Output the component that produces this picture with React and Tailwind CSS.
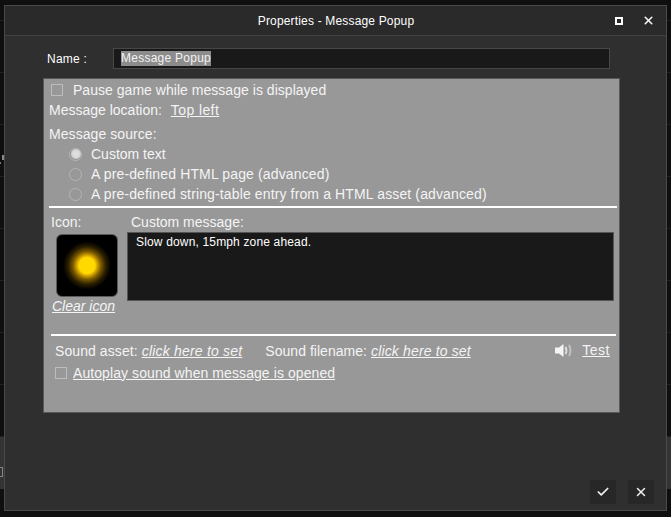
import { Check, X } from "lucide-react";

const rows = [21, 52, 52, 52, 52, 52, 52, 52, 52];

function Checkbox() {
  return <span className="block w-[12px] h-[12px] border border-[#bdbdbd] shrink-0" />;
}

function Radio({ on, label, className }) {
  return (
    <div className="flex items-center h-[20px]">
      <span className="flex items-center justify-center w-[13px] h-[13px] ml-[25px] mr-[9px] rounded-full border border-[#b5b5b5] shrink-0">
        {on && <span className="block w-[10px] h-[10px] rounded-full bg-[radial-gradient(circle,#e2e2e2_0,#d6d6d6_55%,#aaaaaa_100%)]" />}
      </span>
      <span className={className}>{label}</span>
    </div>
  );
}

function Speaker() {
  return (
    <svg width="17" height="13" viewBox="0 0 17 13" className="shrink-0">
      <path d="M0 3.500h4L8.500 0v13L4 9.500H0z" fill="#f4f4f4" />
      <path d="M10.500 3c1.200 2.200 1.200 4.800 0 7" stroke="#e0e0e0" strokeWidth="1.800" fill="none" />
      <path d="M14 1c1.800 3.300 1.800 7.700 0 11" stroke="#c4c4c4" strokeWidth="1.800" fill="none" />
    </svg>
  );
}

export default function App() {
  return (
    <div className="relative w-[671px] h-[517px] bg-[#0f0f0f] overflow-hidden font-['Liberation_Sans',Arial,sans-serif]">
      {/* list behind the dialog, only its edges show */}
      <div className="flex flex-col">
        {rows.map((h, i) => (
          <div key={i} style={{ height: h }} className="border-b border-[#1f1f1f]" />
        ))}
        <div className="h-[52px] bg-[#343434]" />
      </div>
      <span className="absolute left-[2px] top-[155px] w-[2px] h-[5px] bg-[#8a8a8a]" />
      <span className="absolute left-0 top-[162px] w-px h-[2px] bg-[#777777]" />
      <span className="absolute left-0 top-[467px] w-[3px] h-[10px] border border-l-0 border-[#858585]" />

      <div className="absolute left-[4px] top-[5px] w-[663px] h-[506px] flex flex-col bg-[#2f2f2f] border border-[#4a4a4a]">
        <div className="h-[30px] shrink-0 flex items-center bg-[#2a2a2a] border-b border-[#404040] text-[12px] tracking-[0.17px] text-white">
          <div className="flex-1 text-center pl-[52px]">Properties - Message Popup</div>
          <span className="block w-[8px] h-[8px] border-2 border-white mr-[19px]" />
          <X size={13} strokeWidth={3} color="#f5f5f5" className="mr-[11px]" />
        </div>

        <div className="flex items-center h-[21px] mt-[12px] pl-[42px] text-[12px] tracking-[0.25px] text-white">
          <span className="w-[66px]">Name :</span>
          <div className="w-[497px] h-[21px] flex items-center pl-[7px] bg-[#191919] border border-[#474747]">
            <span className="bg-[#8c8c8c] leading-[15px] text-[#f2f2f2]">Message Popup</span>
          </div>
        </div>

        <div className="w-[577px] h-[335px] ml-[38px] mt-[9px] bg-[#989898] border border-[#585858] text-[14px] text-[#f4f4f4]">
          <div className="flex items-center gap-[10px] h-[20px] pl-[7px] mt-px">
            <Checkbox />
            <span className="tracking-[0.03px]">Pause game while message is displayed</span>
          </div>
          <div className="flex items-center h-[20px] pl-[5px]">
            <span>Message location:</span>
            <span className="ml-[9px] underline tracking-[0.4px]">Top left</span>
          </div>
          <div className="flex items-center h-[20px] pl-[5px] mt-[4px] tracking-[0.07px]">Message source:</div>
          <Radio on label="Custom text" />
          <Radio label="A pre-defined HTML page (advanced)" className="tracking-[0.14px]" />
          <Radio label="A pre-defined string-table entry from a HTML asset (advanced)" className="tracking-[0.13px]" />
          <div className="h-[2px] bg-white ml-[5px] mr-[2px] mt-[2px]" />

          <div className="flex mt-[6px] pl-[7px]">
            <div className="w-[76px] shrink-0 flex flex-col">
              <span className="leading-[16px]">Icon:</span>
              <div className="w-[62px] h-[63px] mt-[4px] ml-[5px] rounded-[6px] border border-[#5a5a5a] bg-[radial-gradient(circle,#ffd900_0,#ffd900_8px,#d9a800_10px,#7a5a00_14px,#2a1e00_19px,#000000_24px)]" />
              <span className="italic underline leading-[18px] ml-[1px]">Clear icon</span>
            </div>
            <div className="flex-1 flex flex-col">
              <span className="leading-[16px] ml-[4px]">Custom message:</span>
              <div className="w-[487px] h-[69px] mt-[2px] bg-[#191919] border border-[#555555] px-[8px] text-[12px] tracking-[0.16px] text-white">
                Slow down, 15mph zone ahead.
              </div>
            </div>
          </div>

          <div className="h-[2px] bg-white ml-[7px] mr-[3px] mt-[19px]" />
          <div className="flex items-center h-[20px] mt-[5px] pl-[11px] pr-[9px]">
            <span className="tracking-[0.08px]">Sound asset:</span>
            <span className="ml-[4px] italic underline tracking-[0.2px]">click here to set</span>
            <span className="ml-[23px] tracking-[0.03px]">Sound filename:</span>
            <span className="ml-[4px] italic underline tracking-[0.15px]">click here to set</span>
            <div className="ml-auto flex items-center -mt-[2px]">
              <Speaker />
              <span className="ml-[10px] underline tracking-[0.5px]">Test</span>
            </div>
          </div>
          <div className="flex items-center gap-[6px] h-[20px] mt-[2px] pl-[11px]">
            <Checkbox />
            <span className="underline tracking-[0.08px]">Autoplay sound when message is opened</span>
          </div>
        </div>

        <div className="flex justify-end gap-[12px] mt-auto mb-[6px] mr-[12px]">
          <div className="w-[26px] h-[24px] flex items-center justify-center bg-[#272727]">
            <Check size={14} strokeWidth={3} color="#efefef" />
          </div>
          <div className="w-[26px] h-[24px] flex items-center justify-center bg-[#272727]">
            <X size={14} strokeWidth={2.500} color="#efefef" />
          </div>
        </div>
      </div>
    </div>
  );
}
